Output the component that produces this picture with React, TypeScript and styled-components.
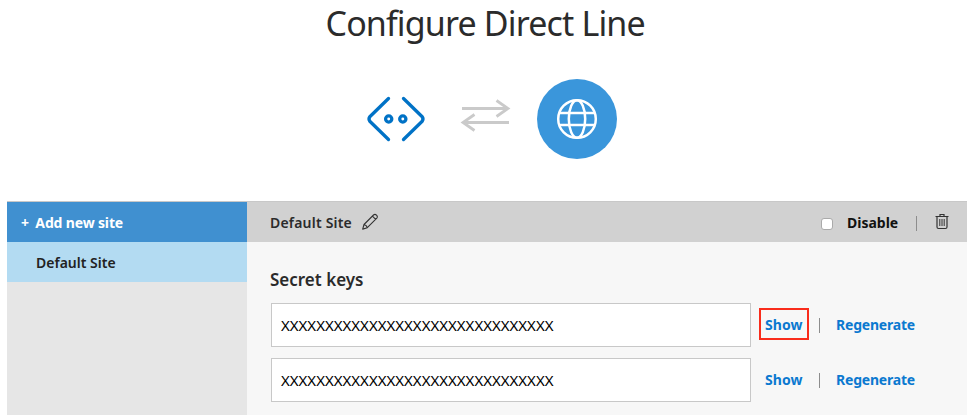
import React from 'react';
import styled, { createGlobalStyle } from 'styled-components';

const GlobalStyle = createGlobalStyle`
  * { box-sizing: border-box; }
  body {
    margin: 0;
    background: #fff;
    color: #2b2b2b;
    font-family: "Noto Sans", "Open Sans", sans-serif;
    overflow: hidden;
  }
`;

const Page = styled.main`
  width: 973px;
  height: 415px;
  display: flex;
  flex-direction: column;
  overflow: hidden;
`;

const Title = styled.h1`
  margin: 0;
  height: 79px;
  padding-left: 325.5px;
  font-size: 34px;
  font-weight: 400;
  line-height: 46px;
  letter-spacing: -0.85px;
  white-space: nowrap;
`;

const Channel = styled.div`
  height: 122px;
  display: flex;
  align-items: flex-start;
  padding-left: 365px;
`;

const BotIcon = styled.svg`
  width: 62px;
  height: 80px;
`;

const ArrowsIcon = styled.svg`
  width: 54px;
  height: 80px;
  margin: 0 24px 0 32px;
`;

const GlobeBadge = styled.div`
  width: 80px;
  height: 80px;
  display: flex;
  align-items: center;
  justify-content: center;
  border-radius: 50%;
  background: #3a96db;
`;

const Panel = styled.section`
  width: 960px;
  height: 214px;
  margin-left: 7px;
  display: grid;
  grid-template-columns: 240px 720px;
  background: #f7f7f7;
`;

const Sidebar = styled.nav`
  border-top: 1px solid #c8c8c8;
  background: #e6e6e6;
`;

const SiteItem = styled.div<{ $primary?: boolean }>`
  height: 40px;
  padding-left: ${(p) => (p.$primary ? 14 : 29)}px;
  background: ${(p) => (p.$primary ? '#4090d0' : '#b3dbf2')};
  color: ${(p) => (p.$primary ? '#fff' : '#222')};
  font-size: 14px;
  font-weight: ${(p) => (p.$primary ? 700 : 600)};
  line-height: 41px;
  letter-spacing: ${(p) => (p.$primary ? -0.15 : 0)}px;
  white-space: nowrap;
`;

const Plus = styled.span`
  margin-right: 3px;
`;

const Toolbar = styled.header`
  height: 41px;
  display: flex;
  align-items: center;
  padding-left: 23px;
  border-top: 1px solid #c8c8c8;
  background: #d1d1d1;
`;

const SiteName = styled.span`
  width: 91px;
  padding-top: 1px;
  font-size: 14px;
  font-weight: 600;
  line-height: 20px;
  letter-spacing: 0.2px;
`;

const ToolIcon = styled.svg`
  width: 18px;
  height: 18px;
  flex: none;
`;

const TrashIcon = styled(ToolIcon)`
  margin-left: 16px;
`;

const DisableLabel = styled.label`
  width: 95px;
  margin-left: 442px;
  padding-top: 1px;
  display: flex;
  align-items: center;
  color: #111;
  font-size: 14px;
  font-weight: 700;
  line-height: 20px;
  letter-spacing: 0;
`;

const Checkbox = styled.input`
  appearance: none;
  width: 12px;
  height: 12px;
  margin: 2px 14px 0 0;
  flex: none;
  border: 1px solid #aaa;
  border-radius: 3px;
  background: #fff;
`;

const Divider = styled.span`
  width: 1px;
  height: 15px;
  flex: none;
  background: #8d8d8d;
`;

const ToolbarDivider = styled(Divider)`
  margin-top: 2px;
`;

const Keys = styled.div`
  padding: 24px 0 0 24px;
`;

const KeysTitle = styled.h2`
  margin: 0 0 9px -1px;
  font-size: 17px;
  font-weight: 600;
  line-height: 28px;
  letter-spacing: 0;
`;

const KeyRow = styled.div`
  height: 44px;
  margin-bottom: 11px;
  display: flex;
  align-items: center;
`;

const KeyField = styled.div`
  width: 480px;
  height: 44px;
  padding-left: 9px;
  border: 1px solid #c8c8c8;
  background: #fff;
  color: #000;
  font-size: 15px;
  line-height: 42px;
  white-space: nowrap;
`;

const KeyAction = styled.a<{ $marked?: boolean }>`
  height: 32px;
  margin-left: 8px;
  margin-bottom: 2px;
  width: 50px;
  padding-left: 4px;
  border: 2px solid ${(p) => (p.$marked ? '#f92c1b' : 'transparent')};
  color: #0b79d0;
  font-size: 14px;
  font-weight: 700;
  line-height: 29px;
  letter-spacing: 0.05px;
  white-space: nowrap;
`;

const Regenerate = styled(KeyAction)`
  width: 90px;
  margin-left: 10px;
  letter-spacing: -0.2px;
`;

const KeyDivider = styled(Divider)`
  margin-left: 10px;
`;

const KEY = 'XXXXXXXXXXXXXXXXXXXXXXXXXXXXXXX';
const keys = [
  { id: 1, marked: true },
  { id: 2, marked: false },
];

export default function App() {
  return (
    <Page>
      <GlobalStyle />
      <Title>Configure Direct Line</Title>
      <Channel>
        <BotIcon viewBox="0 0 62 80" fill="none" stroke="#0072c6" strokeWidth="3.3" strokeLinecap="round" strokeLinejoin="round">
          <path d="M23.5 19.5 4.8 37.7Q3.2 40 4.8 42.3L23.5 60.5M38.5 19.5 57.2 37.7Q58.8 40 57.2 42.3L38.5 60.5" />
          <circle cx="23.7" cy="40" r="3.1" />
          <circle cx="37.8" cy="40" r="3.1" />
        </BotIcon>
        <ArrowsIcon viewBox="0 0 54 80" fill="none" stroke="#cacaca" strokeWidth="2.8">
          <path d="M3 29.5H49M37.5 21.5 49 29.5 37.5 37.5M50 43.5H4M15.5 35.5 4 43.5 15.5 51.5" />
        </ArrowsIcon>
        <GlobeBadge>
          <svg width="42" height="42" viewBox="0 0 42 42" fill="none" stroke="#fff" strokeWidth="2.5">
            <circle cx="21" cy="21" r="18.8" />
            <ellipse cx="21" cy="21" rx="8.2" ry="18.8" />
            <path d="M3 15H39M3 27H39" />
          </svg>
        </GlobeBadge>
      </Channel>
      <Panel>
        <Sidebar>
          <SiteItem $primary><Plus>+</Plus> Add new site</SiteItem>
          <SiteItem>Default Site</SiteItem>
        </Sidebar>
        <div>
          <Toolbar>
            <SiteName>Default Site</SiteName>
            <ToolIcon viewBox="0 0 18 18" fill="none" stroke="#333" strokeWidth="1.1" strokeLinejoin="round">
              <path d="M1.7 16.1 3 11.5 12.5 2Q14 .7 15.5 2.2T15.8 5.2L6.3 14.7ZM3 11.5Q5.7 12 6.3 14.7M11.4 3.1 14.7 6.3" />
            </ToolIcon>
            <DisableLabel>
              <Checkbox type="checkbox" />
              Disable
            </DisableLabel>
            <ToolbarDivider />
            <TrashIcon viewBox="0 0 18 18" fill="none" stroke="#333" strokeWidth="1.2">
              <path d="M2.5 3.5H15.5M7 3.5V1.5H11V3.5M4 3.5V14Q4 15.5 5.5 15.5H12.5Q14 15.5 14 14V3.5" />
              <path strokeWidth="1" d="M6.8 6V13M9 6V13M11.2 6V13" />
            </TrashIcon>
          </Toolbar>
          <Keys>
            <KeysTitle>Secret keys</KeysTitle>
            {keys.map((k) => (
              <KeyRow key={k.id}>
                <KeyField>{KEY}</KeyField>
                <KeyAction $marked={k.marked}>Show</KeyAction>
                <KeyDivider />
                <Regenerate>Regenerate</Regenerate>
              </KeyRow>
            ))}
          </Keys>
        </div>
      </Panel>
    </Page>
  );
}
